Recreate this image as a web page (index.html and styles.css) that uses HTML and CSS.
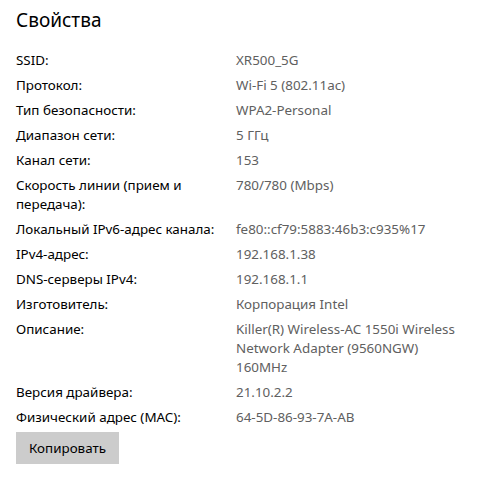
FILE: index.html
```html
<!DOCTYPE html>
<html>
<head>
  <title>Свойства</title>
  <link rel="stylesheet" href="styles.css">
</head>
<body>

<h2 class="title">Свойства</h2>

<div class="props">
  <div class="label">SSID:</div><div class="value">XR500_5G</div>
  <div class="label">Протокол:</div><div class="value">Wi-Fi 5 (802.11ac)</div>
  <div class="label">Тип безопасности:</div><div class="value">WPA2-Personal</div>
  <div class="label">Диапазон сети:</div><div class="value">5 ГГц</div>
  <div class="label">Канал сети:</div><div class="value">153</div>
  <div class="label">Скорость линии (прием и передача):</div><div class="value">780/780 (Mbps)</div>
  <div class="label">Локальный IPv6-адрес канала:</div><div class="value">fe80::cf79:5883:46b3:c935%17</div>
  <div class="label">IPv4-адрес:</div><div class="value">192.168.1.38</div>
  <div class="label">DNS-серверы IPv4:</div><div class="value">192.168.1.1</div>
  <div class="label">Изготовитель:</div><div class="value">Корпорация Intel</div>
  <div class="label">Описание:</div><div class="value">Killer(R) Wireless-AC 1550i Wireless Network Adapter (9560NGW) 160MHz</div>
  <div class="label">Версия драйвера:</div><div class="value">21.10.2.2</div>
  <div class="label">Физический адрес (MAC):</div><div class="value">64-5D-86-93-7A-AB</div>
</div>

<button class="copy">Копировать</button>

</body>
</html>
```

FILE: styles.css
```css
body {
  margin: 0;
  padding: 0 16px;
  background: #fff;
  color: #000;
  font-family: "Noto Sans", "Open Sans", sans-serif;
  font-size: 13.4px;
}
.title {
  margin: 6px 0 0;
  font-size: 19px;
  font-weight: normal;
  line-height: 28px;
}
.props {
  display: grid;
  grid-template-columns: 220px 222px;
  row-gap: 6px;
  margin-top: 17px;
  line-height: 19px;
}
.label {
  padding-right: 8px;
}
.value {
  color: #606060;
}
.copy {
  margin-top: 5px;
  height: 32px;
  padding: 0 13px;
  border: none;
  background: #cccccc;
  color: #000;
  font-family: inherit;
  font-size: 13.4px;
}
```
